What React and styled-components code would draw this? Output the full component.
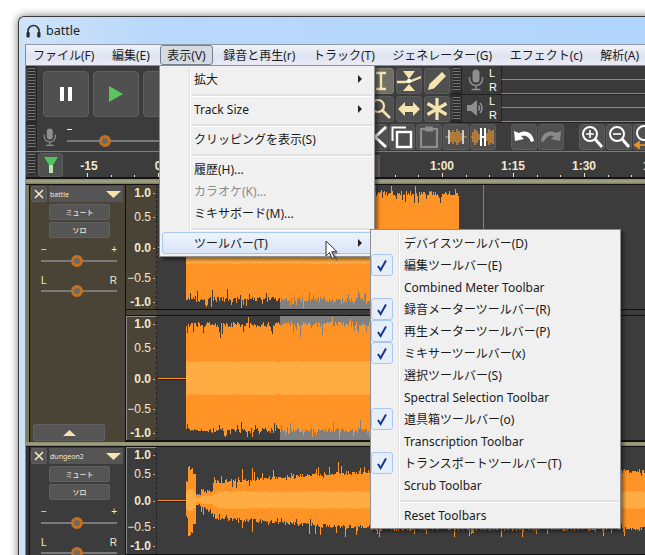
import React from "react";
import styled, { createGlobalStyle } from "styled-components";

const GlobalStyle = createGlobalStyle`
  html, body { margin: 0; padding: 0; background: #fff; }
  * { box-sizing: border-box; }
`;

const UI_FONT = `"Noto Sans", "Noto Sans CJK JP", sans-serif`;
const CREAM = "#f2e8cc";
const ICON = "#f5e3b0";

const Page = styled.div`
  width: 645px;
  height: 555px;
  overflow: hidden;
  position: relative;
  padding: 16px 0 0 18px;
  background: #fff;
`;

const Window = styled.div`
  width: 660px;
  height: 560px;
  background: linear-gradient(90deg, #cfe3f8 0, #b9d8fb 20%, #b0d4fc 100%);
  border: 1px solid #3a3a3a;
  border-right: 0;
  border-bottom: 0;
  border-radius: 6px 0 0 0;
  box-shadow: 0 0 9px rgba(0, 0, 0, 0.55);
  padding-left: 6px;
`;

const TitleBar = styled.div`
  height: 27px;
  display: flex;
  align-items: center;
  gap: 5px;
  margin-left: 1px;
  font: 12.5px ${UI_FONT};
  color: #222;
`;

const Client = styled.div`
  background: #3c3c3c;
  border-left: 1px solid #7c8a98;
  border-top: 1px solid #8f9aa6;
`;

const MenuBar = styled.div`
  height: 21px;
  display: flex;
  align-items: center;
  background: linear-gradient(180deg, #f0f3fa 0, #dfe3f0 55%, #e9ecf6 100%);
  border-bottom: 1px solid #8b8b8b;
`;

const MenuBarItem = styled.div`
  height: 20px;
  padding: 0 6px;
  margin-right: 3.5px;
  display: flex;
  align-items: center;
  font: 12px ${UI_FONT};
  color: #1c1c1c;
  white-space: nowrap;
  border: 1px solid ${(p) => (p.$open ? "#75808c" : "transparent")};
  border-radius: 3px;
  background: ${(p) => (p.$open ? "#d5dbe4" : "transparent")};
`;

const Row = styled.div`
  display: flex;
  height: ${(p) => p.$h}px;
  background: #2b2b2b;
`;

const Grip = styled.div`
  flex: none;
  width: 11px;
  margin: 2px 0;
  border-right: 1px solid #222;
  background: repeating-linear-gradient(180deg, #747474 0 1px, #2d2d2d 1px 3px) center / 7px 100% no-repeat #414141;
`;

const Transport = styled.div`
  flex: none;
  width: 331px;
  display: flex;
  gap: 4px;
  padding: 5px 0 0 6px;
  background: #3c3c3c;
`;

const BigButton = styled.div`
  flex: none;
  width: 46px;
  height: 46px;
  display: flex;
  align-items: center;
  justify-content: center;
  background: #505050;
  border: 1px solid #5f5f5f;
  border-radius: 4px;
`;

const ToolGrid = styled.div`
  flex: none;
  display: grid;
  grid-template-columns: repeat(3, 26px);
  grid-auto-rows: 26px;
  gap: 2px;
  padding: 2px 1px 0 0;
  width: 83px;
  background: #3c3c3c;
`;

const Tool = styled.div`
  display: flex;
  align-items: center;
  justify-content: center;
  background: ${(p) => (p.$on ? "#707066" : "#505050")};
  border: 1px solid ${(p) => (p.$on ? "#7c7c72" : "#5c5c5c")};
  border-radius: 3px;
`;

const MeterStack = styled.div`
  flex: 1;
  display: flex;
  flex-direction: column;
`;

const MeterRow = styled.div`
  flex: 1;
  display: flex;
  border-bottom: 1px solid #222;
`;

const MeterBody = styled.div`
  flex: 1;
  display: flex;
  background: #3c3c3c;
`;

const MeterIcon = styled.div`
  flex: none;
  width: 27px;
  display: flex;
  align-items: center;
  justify-content: center;
`;

const ChannelLetters = styled.div`
  flex: none;
  width: 12px;
  display: flex;
  flex-direction: column;
  justify-content: space-around;
  font: 11px "Liberation Sans", sans-serif;
  color: #fff;
`;

const MeterBars = styled.div`
  flex: 1;
  display: flex;
  flex-direction: column;
`;

const MeterBar = styled.div`
  flex: 1;
  background: #3a3a3a;
  border-left: 1px solid #222;
  border-bottom: 1px solid #8a8a8a;
`;

const MixerBar = styled.div`
  flex: none;
  width: 325px;
  display: flex;
  align-items: center;
  gap: 10px;
  padding-left: 6px;
  background: #3c3c3c;
`;

const SliderWrap = styled.div`
  position: relative;
  height: 12px;
  width: ${(p) => p.$w}px;
  flex: none;
`;

const SliderLine = styled.div`
  position: absolute;
  left: 0;
  right: 0;
  top: 50%;
  margin-top: -1px;
  height: 2px;
  background: #7a7a7a;
`;

const Knob = styled.div`
  position: absolute;
  top: 50%;
  margin: -6px 0 0 -6px;
  width: 12px;
  height: 12px;
  border-radius: 50%;
  background: #6f6a60;
  border: 3px solid #c4701e;
`;

const MixerSlider = styled(SliderWrap)`
  margin-top: 7px;
  &::before {
    content: "";
    position: absolute;
    left: 0;
    top: -6px;
    width: 5px;
    height: 1px;
    background: ${CREAM};
  }
`;

const EditBar = styled.div`
  flex: 1;
  display: flex;
  gap: 1px;
  padding: 1px 0 0 0;
  background: #3c3c3c;
`;

const EditButton = styled(Tool)`
  flex: none;
  width: 26px;
  height: 26px;
  margin-left: ${(p) => p.$gap || 0}px;
`;

const RulerRow = styled.div`
  display: flex;
  height: 28px;
  background: #3c3c3c;
  border-top: 1px solid #7d7d7d;
  border-bottom: 2px solid #141414;
`;

const FilterSlot = styled.div`
  flex: none;
  width: 28px;
  padding: 1px 0 0 1px;
`;

const FilterButton = styled.div`
  width: 25px;
  height: 24px;
  display: flex;
  align-items: center;
  justify-content: center;
  background: #505050;
  border: 1px solid #5c5c5c;
  border-radius: 3px;
`;

const OliveBand = styled.div`
  height: ${(p) => p.$h || 6}px;
  background: linear-gradient(180deg, #8c8c6c 0, #a2a284 50%, #7c7c60 100%);
  border-bottom: 1px solid #111;
`;

const TrackWrap = styled.div`
  display: flex;
  background: ${(p) => (p.$sel ? "#4a4436" : "#3c3c3c")};
  border-left: 3px solid ${(p) => (p.$sel ? "#7f7f62" : "#333")};
`;

const TrackPanel = styled.div`
  flex: none;
  width: 97px;
  padding: 1px 0 0 1px;
  display: flex;
  flex-direction: column;
  position: relative;
  border-left: 1px solid #111;
  border-right: 1px solid #111;
`;

const TrackHead = styled.div`
  display: flex;
  gap: 2px;
  height: 16px;
  margin-bottom: 2px;
`;

const CloseButton = styled.div`
  flex: none;
  width: 16px;
  display: flex;
  align-items: center;
  justify-content: center;
  background: #555;
  border: 1px solid #5f5f5f;
  border-radius: 2px;
`;

const TrackTitle = styled.div`
  flex: none;
  width: 74px;
  display: flex;
  align-items: center;
  justify-content: space-between;
  padding: 0 2px 0 1px;
  background: #555;
  font: 7px ${UI_FONT};
  color: ${CREAM};
`;

const SmallButton = styled.div`
  width: 61px;
  height: 16px;
  margin: 0 0 2px 18px;
  display: flex;
  align-items: center;
  justify-content: center;
  background: #555;
  border: 1px solid #606060;
  border-radius: 2px;
  font: 500 7px ${UI_FONT};
  color: ${CREAM};
`;

const SliderLabels = styled.div`
  display: flex;
  justify-content: space-between;
  width: 76px;
  margin: ${(p) => p.$top}px 0 0 10px;
  height: 10px;
  font: 10px/10px "Liberation Sans", sans-serif;
  color: ${CREAM};
`;

const PanelSlider = styled(SliderWrap)`
  margin: ${(p) => p.$top}px 0 0 10px;
`;

const CollapseButton = styled.div`
  position: absolute;
  left: 3px;
  bottom: 1px;
  width: 72px;
  height: 17px;
  display: flex;
  align-items: center;
  justify-content: center;
  background: #555;
  border: 1px solid #606060;
  border-radius: 2px;
`;

const Channels = styled.div`
  flex: 1;
  display: flex;
  flex-direction: column;
  min-width: 0;
`;

const Channel = styled.div`
  display: flex;
  height: ${(p) => p.$h}px;
  box-sizing: content-box;
  border-bottom: ${(p) => p.$line || 1}px solid #111;
`;

const ChannelGap = styled.div`
  display: flex;
  height: 6px;
  border-bottom: 1px solid #111;
`;

const GapRuler = styled.div`
  flex: none;
  width: 31px;
`;

const GapWave = styled.div`
  flex: 1;
  background: #3c3c3c;
`;

const RulerBox = styled.div`
  flex: none;
  width: 31px;
  border-left: 1px solid ${(p) => (p.$lit ? "#8c8c8c" : "transparent")};
  border-top: 1px solid ${(p) => (p.$lit ? "#8c8c8c" : "transparent")};
  border-right: 1px dashed #222;
  svg { display: block; }
`;

const WaveBox = styled.div`
  flex: 1;
  background: #3c3c3c;
  overflow: hidden;
  svg { display: block; }
`;

const Menu = styled.div`
  position: absolute;
  left: ${(p) => p.$x}px;
  top: ${(p) => p.$y}px;
  width: ${(p) => p.$w}px;
  padding: 2px 2px 2px;
  background: #f0f0f0;
  border: 1px solid #8f8f8f;
  box-shadow: 3px 3px 3px rgba(0, 0, 0, 0.4);
  z-index: ${(p) => p.$z};
`;

const Gutter = styled.div`
  position: absolute;
  left: ${(p) => p.$x}px;
  top: 2px;
  bottom: 2px;
  width: 1px;
  background: #e0e0e0;
  border-right: 1px solid #fff;
  box-sizing: content-box;
`;

const MenuItem = styled.div`
  position: relative;
  height: 22px;
  display: flex;
  align-items: center;
  padding-left: ${(p) => p.$pad}px;
  font: 12px ${UI_FONT};
  color: ${(p) => (p.$off ? "#8a8a8a" : "#1a1a1a")};
  white-space: nowrap;
  border: 1px solid ${(p) => (p.$hot ? "#a9c8ef" : "transparent")};
  border-radius: 3px;
  background: ${(p) => (p.$hot ? "linear-gradient(180deg, #ecf3fc, #d9e6f7)" : "transparent")};
`;

const Arrow = styled.span`
  position: absolute;
  right: 9px;
  top: 6px;
  width: 0;
  height: 0;
  border-left: 4px solid #222;
  border-top: 4px solid transparent;
  border-bottom: 4px solid transparent;
`;

const CheckBox = styled.span`
  position: absolute;
  left: -3px;
  top: -1px;
  width: 22px;
  height: 22px;
  display: flex;
  align-items: center;
  justify-content: center;
  background: #e6eefa;
  border: 1px solid #a9c8ef;
  border-radius: 3px;
`;

const MenuSep = styled.div`
  height: 8px;
  margin-left: ${(p) => p.$left}px;
  padding-top: 4px;
  &::after {
    content: "";
    display: block;
    height: 2px;
    background: #e0e0e0;
    border-bottom: 1px solid #fff;
  }
`;

const Pointer = styled.svg`
  position: absolute;
  left: 325px;
  top: 240px;
  z-index: 5;
`;

// ---- icons

const Headphones = () => (
  <svg width="15" height="14" viewBox="0 0 15 14">
    <path d="M2 10V7a5.5 5.5 0 0 1 11 0v3" fill="none" stroke="#2a2a2a" strokeWidth="1.6" />
    <rect x="0.5" y="8" width="3.2" height="5.5" rx="1" fill="#2a2a2a" />
    <rect x="11.3" y="8" width="3.2" height="5.5" rx="1" fill="#2a2a2a" />
  </svg>
);

const Mic = ({ c = "#8e8e8e", s = 1 }) => (
  <svg width={16 * s} height={22 * s} viewBox="0 0 16 22">
    <rect x="4.5" y="0.5" width="7" height="13" rx="3.5" fill={c} />
    <path d="M1.5 8v2a6.5 6.5 0 0 0 13 0V8M8 17v3M3.5 20.5h9" fill="none" stroke={c} strokeWidth="1.5" />
  </svg>
);

const Speaker = () => (
  <svg width="20" height="20" viewBox="0 0 20 20">
    <path d="M1 7h4l6-5v16l-6-5H1z" fill="#8e8e8e" />
    <path d="M14 5a7 7 0 0 1 0 10M12.5 7.5a4 4 0 0 1 0 5" fill="none" stroke="#8e8e8e" strokeWidth="1.6" />
  </svg>
);

const Svg24 = ({ children }) => (
  <svg width="24" height="24" viewBox="0 0 24 24">
    {children}
  </svg>
);

const IBeam = () => (
  <Svg24>
    <path d="M7 4h10M7 20h10M12 4v16" stroke={ICON} strokeWidth="2.4" fill="none" />
  </Svg24>
);

const EnvelopeTool = () => (
  <Svg24>
    <path d="M6 2h12l-6 8zM6 22h12l-6-7z" fill={ICON} />
    <path d="M0 13h8l6-1 10-4" stroke={ICON} strokeWidth="2.4" fill="none" />
    <circle cx="12" cy="12" r="2.2" fill="#fff" />
  </Svg24>
);

const Pencil = () => (
  <Svg24>
    <path d="M3 21l1.5-6L17 3l4 4L9 19.5z" fill={ICON} />
  </Svg24>
);

const Magnifier = () => (
  <Svg24>
    <circle cx="9" cy="9" r="6" fill="none" stroke={ICON} strokeWidth="2.2" />
    <path d="M13.5 13.5L21 21" stroke={ICON} strokeWidth="2.6" />
  </Svg24>
);

const TimeShift = () => (
  <Svg24>
    <path d="M1 12l7-7v4h8V5l7 7-7 7v-4H8v4z" fill={ICON} />
  </Svg24>
);

const Star = () => (
  <Svg24>
    <path d="M12 1v22M2.5 6.5l19 11M21.5 6.5l-19 11" stroke={ICON} strokeWidth="3.2" fill="none" />
  </Svg24>
);

const Cut = () => (
  <Svg24>
    <path d="M1 2l22 20M23 2L1 22" stroke="#fff" strokeWidth="3" fill="none" />
  </Svg24>
);

const Copy = () => (
  <Svg24>
    <path d="M2.5 16V2.5H16" stroke="#fff" strokeWidth="2" fill="none" />
    <rect x="7" y="7" width="14" height="15" fill="none" stroke="#fff" strokeWidth="2.4" />
  </Svg24>
);

const Paste = () => (
  <Svg24>
    <rect x="4" y="4" width="16" height="18" fill="none" stroke="#8c8c8c" strokeWidth="2.2" />
    <rect x="8" y="1.5" width="8" height="5" fill="#8c8c8c" />
  </Svg24>
);

const wavy = "M1 12h4 M7 7v10 M9 5v14 M11 7v10 M13 4v16 M15 6v12 M17 8v8 M19 12h4";

const Trim = () => (
  <Svg24>
    <path d={wavy} stroke="#f0962a" strokeWidth="1.2" fill="none" />
    <path d="M5 5v14M19 5v14" stroke="#fff" strokeWidth="1.4" />
  </Svg24>
);

const Silence = () => (
  <Svg24>
    <path d="M0 12h2M2 7v10M4 4v16M6 6v12M8 9v6M16 8v8M18 4v16M20 6v12M22 5v14" stroke="#f0962a" strokeWidth="1.2" fill="none" />
    <path d="M10 3v18M14 3v18M10 12h4" stroke="#fff" strokeWidth="2" fill="none" />
  </Svg24>
);

const Undo = ({ c = "#fff", flip }) => (
  <svg width="24" height="24" viewBox="0 0 24 24" style={flip ? { transform: "scaleX(-1)" } : undefined}>
    <path d="M2 6l1 10 9-2-3-3c4-1 8 0 10 6l3-1c-1-8-8-12-15-8z" fill={c} />
  </svg>
);

const ZoomGlass = ({ sign }) => (
  <Svg24>
    <circle cx="10" cy="9" r="7" fill="none" stroke="#fff" strokeWidth="2" />
    <path d="M15 14l7 8" stroke="#fff" strokeWidth="3" />
    <path d={sign === "+" ? "M6 9h8M10 5v8" : "M6 9h8"} stroke="#fff" strokeWidth="1.6" />
  </Svg24>
);

const ZoomFit = () => (
  <Svg24>
    <circle cx="10" cy="8" r="7" fill="none" stroke="#fff" strokeWidth="2" />
    <path d="M1 20h22M1 20l4-3v6zM23 20l-4-3v6zM12 16v8M15 16v8" stroke="#f0962a" strokeWidth="1.6" fill="none" />
  </Svg24>
);

const Funnel = () => (
  <svg width="14" height="18" viewBox="0 0 14 18">
    <path d="M0 1h14L9 9H5z" fill="#4fc45a" />
    <path d="M5 9h4v8H5z" fill="#b8e8b0" />
  </svg>
);

const Check = () => (
  <svg width="12" height="13" viewBox="0 0 12 13">
    <path d="M2 7l2.6 4L10 1.5" fill="none" stroke="#16378f" strokeWidth="2" />
  </svg>
);

const Cross = () => (
  <svg width="10" height="10" viewBox="0 0 10 10">
    <path d="M1 1l8 8M9 1l-8 8" stroke={CREAM} strokeWidth="1.6" />
  </svg>
);

const Tri = ({ up, w = 15, h = 7 }) => (
  <svg width={w} height={h} viewBox="0 0 15 7">
    <path d={up ? "M7.5 0L15 7H0z" : "M0 0h15L7.5 7z"} fill={ICON} />
  </svg>
);

// ---- drawings

const seeded = (seed) => () => {
  seed = (seed + 0x6d2b79f5) | 0;
  let t = Math.imul(seed ^ (seed >>> 15), 1 | seed);
  t = (t + Math.imul(t ^ (t >>> 7), 61 | t)) ^ t;
  return ((t ^ (t >>> 14)) >>> 0) / 4294967296;
};

const shapeLoud = (x, r) => {
  let top = 51 + r() * 5;
  let bottom = 50 + r() * 5;
  if (r() < 0.14) top -= r() * 11;
  if (r() < 0.14) bottom -= r() * 9;
  if (r() < 0.07) top += 5;
  if (r() < 0.1) bottom += 6;
  return [top, bottom, 16 + r() * 1.5];
};

const shapeDungeon = (x, r) => {
  const jag = () => {
    let v = r() * 4;
    if (r() < 0.12) v += r() * 10;
    if (r() < 0.1) v -= r() * 6;
    return v;
  };
  if (x < 188) return [16 + r() * 4, 16 + r() * 4, 9];
  if (x < 193) return [30 + r() * 6, 32 + r() * 6, 11];
  if (x < 196) return [26, 24, 8];
  if (x < 201) return [4 + r() * 2, 4 + r() * 2, 2];
  if (x < 213) return [7 + r() * 5, 7 + r() * 8, 4];
  if (x < 217) return [14 + r() * 10, 14 + r() * 10, 6];
  const base = 16 + Math.min(1, (x - 217) / 120) * 9 + (x > 370 ? 2 : 0);
  return [base + jag(), base + jag(), 7.5 + r() * 1.5];
};

const buildWave = (seed, from, to, shape, mid) => {
  const r = seeded(seed);
  let peak = "";
  let rms = "";
  for (let x = from; x < to; x++) {
    const [t, b, m] = shape(x, r);
    const px = x - 157 + 0.5;
    peak += `M${px} ${Math.round(mid - t)}V${Math.round(mid + b)}`;
    rms += `M${px} ${Math.round(mid - m)}V${Math.round(mid + m)}`;
  }
  return { peak, rms };
};

const Waveform = ({ h, seed, to, shape, selected, cursor }) => {
  const mid = Math.floor(h / 2);
  const { peak, rms } = buildWave(seed, 186, to, shape, mid);
  return (
    <svg width="490" height={h} shapeRendering="crispEdges">
      {selected && <rect x={selected[0] - 157} y="0" width={selected[1] - selected[0]} height={h} fill="#808080" />}
      {cursor && <rect x={cursor - 157} y="0" width="1" height={h} fill="#808080" />}
      <rect x="1" y={mid} width="29" height="1" fill="#ff9326" />
      <rect x="1" y={mid + 1} width="29" height="1" fill="#1a1a1a" />
      <path d={peak} stroke="#ff9326" strokeWidth="1" fill="none" />
      <path d={rms} stroke="#ffad42" strokeWidth="1" fill="none" />
    </svg>
  );
};

const DbRuler = ({ h, labels, lit }) => (
  <RulerBox $lit={lit}>
    <svg width="29" height={h}>
      {labels.map(([text, y, bold]) => (
        <g key={text}>
          <text
            x="24"
            y={y + 4}
            textAnchor="end"
            fontFamily="Liberation Sans"
            fontSize="12"
            fontWeight={bold ? 700 : 400}
            fill={CREAM}
          >
            {text}
          </text>
          <rect x="26" y={y} width="2" height="1" fill="#b8b09a" />
        </g>
      ))}
    </svg>
  </RulerBox>
);

const TimeRuler = () => {
  const ticks = [];
  for (let i = 0; i < 30; i++) {
    const x = Math.round(86 - 64 + i * 23.67 - 71);
    if (x >= 0) ticks.push([x, (i - 3) % 3 === 0]);
  }
  const labels = [
    ["-15", 24],
    ["0", 93],
    ["1:00", 377],
    ["1:15", 448],
    ["1:30", 519],
    ["1:45", 590],
  ];
  return (
    <svg width="590" height="25" shapeRendering="crispEdges">
      {ticks.map(([x, major]) => (
        <rect key={x} x={x} y={major ? 21 : 23} width="1" height={major ? 4 : 2} fill={CREAM} />
      ))}
      <rect x="308" y="3" width="7" height="22" fill="#66625a" />
      {labels.map(([text, x]) => (
        <text key={text} x={x} y="18" textAnchor="middle" fontFamily="Liberation Sans" fontSize="12" fontWeight="700" fill={CREAM}>
          {text}
        </text>
      ))}
    </svg>
  );
};

const MENU_BAR = ["ファイル(F)", "編集(E)", "表示(V)", "録音と再生(r)", "トラック(T)", "ジェネレーター(G)", "エフェクト(c)", "解析(A)"];

const VIEW_MENU = [
  { label: "拡大", arrow: true },
  { sep: true },
  { label: "Track Size", arrow: true },
  { sep: true },
  { label: "クリッピングを表示(S)" },
  { sep: true },
  { label: "履歴(H)..." },
  { label: "カラオケ(K)...", off: true },
  { label: "ミキサボード(M)..." },
  { sep: true },
  { label: "ツールバー(T)", arrow: true, hot: true },
];

const TOOLBAR_MENU = [
  { label: "デバイスツールバー(D)" },
  { label: "編集ツールバー(E)", check: true },
  { label: "Combined Meter Toolbar" },
  { label: "録音メーターツールバー(R)", check: true },
  { label: "再生メーターツールバー(P)", check: true },
  { label: "ミキサーツールバー(x)", check: true },
  { label: "選択ツールバー(S)" },
  { label: "Spectral Selection Toolbar" },
  { label: "道具箱ツールバー(o)", check: true },
  { label: "Transcription Toolbar" },
  { label: "トランスポートツールバー(T)", check: true },
  { label: "Scrub Toolbar" },
  { sep: true },
  { label: "Reset Toolbars" },
];

const PopupMenu = ({ x, y, w, z, gutter, pad, items }) => (
  <Menu $x={x} $y={y} $w={w} $z={z}>
    <Gutter $x={gutter} />
    {items.map((it, i) =>
      it.sep ? (
        <MenuSep key={i} $left={gutter + 1} />
      ) : (
        <MenuItem key={i} $pad={pad} $off={it.off} $hot={it.hot}>
          {it.check && (
            <CheckBox>
              <Check />
            </CheckBox>
          )}
          {it.label}
          {it.arrow && <Arrow />}
        </MenuItem>
      )
    )}
  </Menu>
);

const PanelControls = () => (
  <>
    <SmallButton>ミュート</SmallButton>
    <SmallButton>ソロ</SmallButton>
    <SliderLabels $top={5}>
      <span>−</span>
      <span>+</span>
    </SliderLabels>
    <PanelSlider $w={76} $top={0}>
      <SliderLine />
      <Knob style={{ left: 36 }} />
    </PanelSlider>
    <SliderLabels $top={9}>
      <span>L</span>
      <span>R</span>
    </SliderLabels>
    <PanelSlider $w={76} $top={-1}>
      <SliderLine />
      <Knob style={{ left: 36 }} />
    </PanelSlider>
  </>
);

const RULER_UP = (c) => [
  ["1.0", c - 55, true],
  ["0.5", c - 31],
  ["0.0", c, true],
  ["−0.5", c + 30],
  ["-1.0", c + 54, true],
];

export default function App() {
  return (
    <Page>
      <GlobalStyle />
      <Window>
        <TitleBar>
          <Headphones />
          battle
        </TitleBar>
        <Client>
          <MenuBar>
            {MENU_BAR.map((m, i) => (
              <MenuBarItem key={m} $open={i === 2}>
                {m}
              </MenuBarItem>
            ))}
          </MenuBar>

          <Row $h={57}>
            <Grip />
            <Transport>
              <BigButton>
                <svg width="14" height="16" viewBox="0 0 14 16">
                  <path d="M1 1h4v14H1zM9 1h4v14H9z" fill="#fff" />
                </svg>
              </BigButton>
              <BigButton>
                <svg width="16" height="16" viewBox="0 0 16 16">
                  <path d="M1 0l14 8-14 8z" fill="#5cc45c" />
                </svg>
              </BigButton>
              <BigButton />
            </Transport>
            <ToolGrid>
              <Tool $on>
                <IBeam />
              </Tool>
              <Tool>
                <EnvelopeTool />
              </Tool>
              <Tool>
                <Pencil />
              </Tool>
              <Tool>
                <Magnifier />
              </Tool>
              <Tool>
                <TimeShift />
              </Tool>
              <Tool>
                <Star />
              </Tool>
            </ToolGrid>
            <MeterStack>
              <MeterRow>
                <Grip />
                <MeterBody>
                  <MeterIcon>
                    <Mic />
                  </MeterIcon>
                  <ChannelLetters>
                    <span>L</span>
                    <span>R</span>
                  </ChannelLetters>
                  <MeterBars>
                    <MeterBar />
                    <MeterBar />
                  </MeterBars>
                </MeterBody>
              </MeterRow>
              <MeterRow>
                <Grip />
                <MeterBody>
                  <MeterIcon>
                    <Speaker />
                  </MeterIcon>
                  <ChannelLetters>
                    <span>L</span>
                    <span>R</span>
                  </ChannelLetters>
                  <MeterBars>
                    <MeterBar />
                    <MeterBar />
                  </MeterBars>
                </MeterBody>
              </MeterRow>
            </MeterStack>
          </Row>

          <Row $h={28}>
            <Grip />
            <MixerBar>
              <Mic s={0.85} />
              <MixerSlider $w={270}>
                <SliderLine />
                <Knob style={{ left: 38 }} />
              </MixerSlider>
            </MixerBar>
            <EditBar>
              <EditButton>
                <Cut />
              </EditButton>
              <EditButton>
                <Copy />
              </EditButton>
              <EditButton>
                <Paste />
              </EditButton>
              <EditButton>
                <Trim />
              </EditButton>
              <EditButton>
                <Silence />
              </EditButton>
              <EditButton $gap={14}>
                <Undo />
              </EditButton>
              <EditButton>
                <Undo c="#8a8a8a" flip />
              </EditButton>
              <EditButton $gap={14}>
                <ZoomGlass sign="+" />
              </EditButton>
              <EditButton>
                <ZoomGlass sign="-" />
              </EditButton>
              <EditButton>
                <ZoomFit />
              </EditButton>
            </EditBar>
          </Row>

          <RulerRow>
            <Grip />
            <FilterSlot>
              <FilterButton>
                <Funnel />
              </FilterButton>
            </FilterSlot>
            <TimeRuler />
          </RulerRow>
          <OliveBand />

          <TrackWrap $sel>
            <TrackPanel>
              <TrackHead>
                <CloseButton>
                  <Cross />
                </CloseButton>
                <TrackTitle>
                  battle
                  <Tri />
                </TrackTitle>
              </TrackHead>
              <PanelControls />
              <CollapseButton>
                <Tri up w={13} h={6} />
              </CollapseButton>
            </TrackPanel>
            <Channels>
              <Channel $h={124}>
                <DbRuler h={124} labels={RULER_UP(62)} />
                <WaveBox>
                  <Waveform h={124} seed={11} to={459} shape={shapeLoud} selected={[280, 376]} cursor={483} />
                </WaveBox>
              </Channel>
              <ChannelGap>
                <GapRuler />
                <GapWave />
              </ChannelGap>
              <Channel $h={124} $line={2}>
                <DbRuler h={124} labels={RULER_UP(62)} lit />
                <WaveBox>
                  <Waveform h={124} seed={29} to={459} shape={shapeLoud} selected={[280, 376]} cursor={483} />
                </WaveBox>
              </Channel>
            </Channels>
          </TrackWrap>
          <OliveBand $h={5} />

          <TrackWrap>
            <TrackPanel>
              <TrackHead>
                <CloseButton>
                  <Cross />
                </CloseButton>
                <TrackTitle>
                  dungeon2
                  <Tri />
                </TrackTitle>
              </TrackHead>
              <PanelControls />
            </TrackPanel>
            <Channels>
              <Channel $h={107}>
                <DbRuler
                  h={107}
                  lit
                  labels={[
                    ["1.0", 7, true],
                    ["0.5", 26],
                    ["0.0", 53, true],
                    ["−0.5", 79],
                    ["-1.0", 98, true],
                  ]}
                />
                <WaveBox>
                  <Waveform h={107} seed={47} to={646} shape={shapeDungeon} />
                </WaveBox>
              </Channel>
            </Channels>
          </TrackWrap>
        </Client>
      </Window>

      <PopupMenu x={159} y={65} w={216} z={2} gutter={29} pad={31} items={VIEW_MENU} />
      <PopupMenu x={370} y={229} w={251} z={3} gutter={27} pad={30} items={TOOLBAR_MENU} />

      <Pointer width="14" height="21" viewBox="0 0 14 21">
        <path d="M2 2l2 15 3-3 3 6 2-1-3-6h4z" fill="#3a3a3a" opacity="0.4" transform="translate(1 1)" />
        <path d="M1 1v15l3.5-3.5 2.6 6 2.3-1-2.6-5.8H12z" fill="#fff" stroke="#333" strokeWidth="1" />
      </Pointer>
    </Page>
  );
}
